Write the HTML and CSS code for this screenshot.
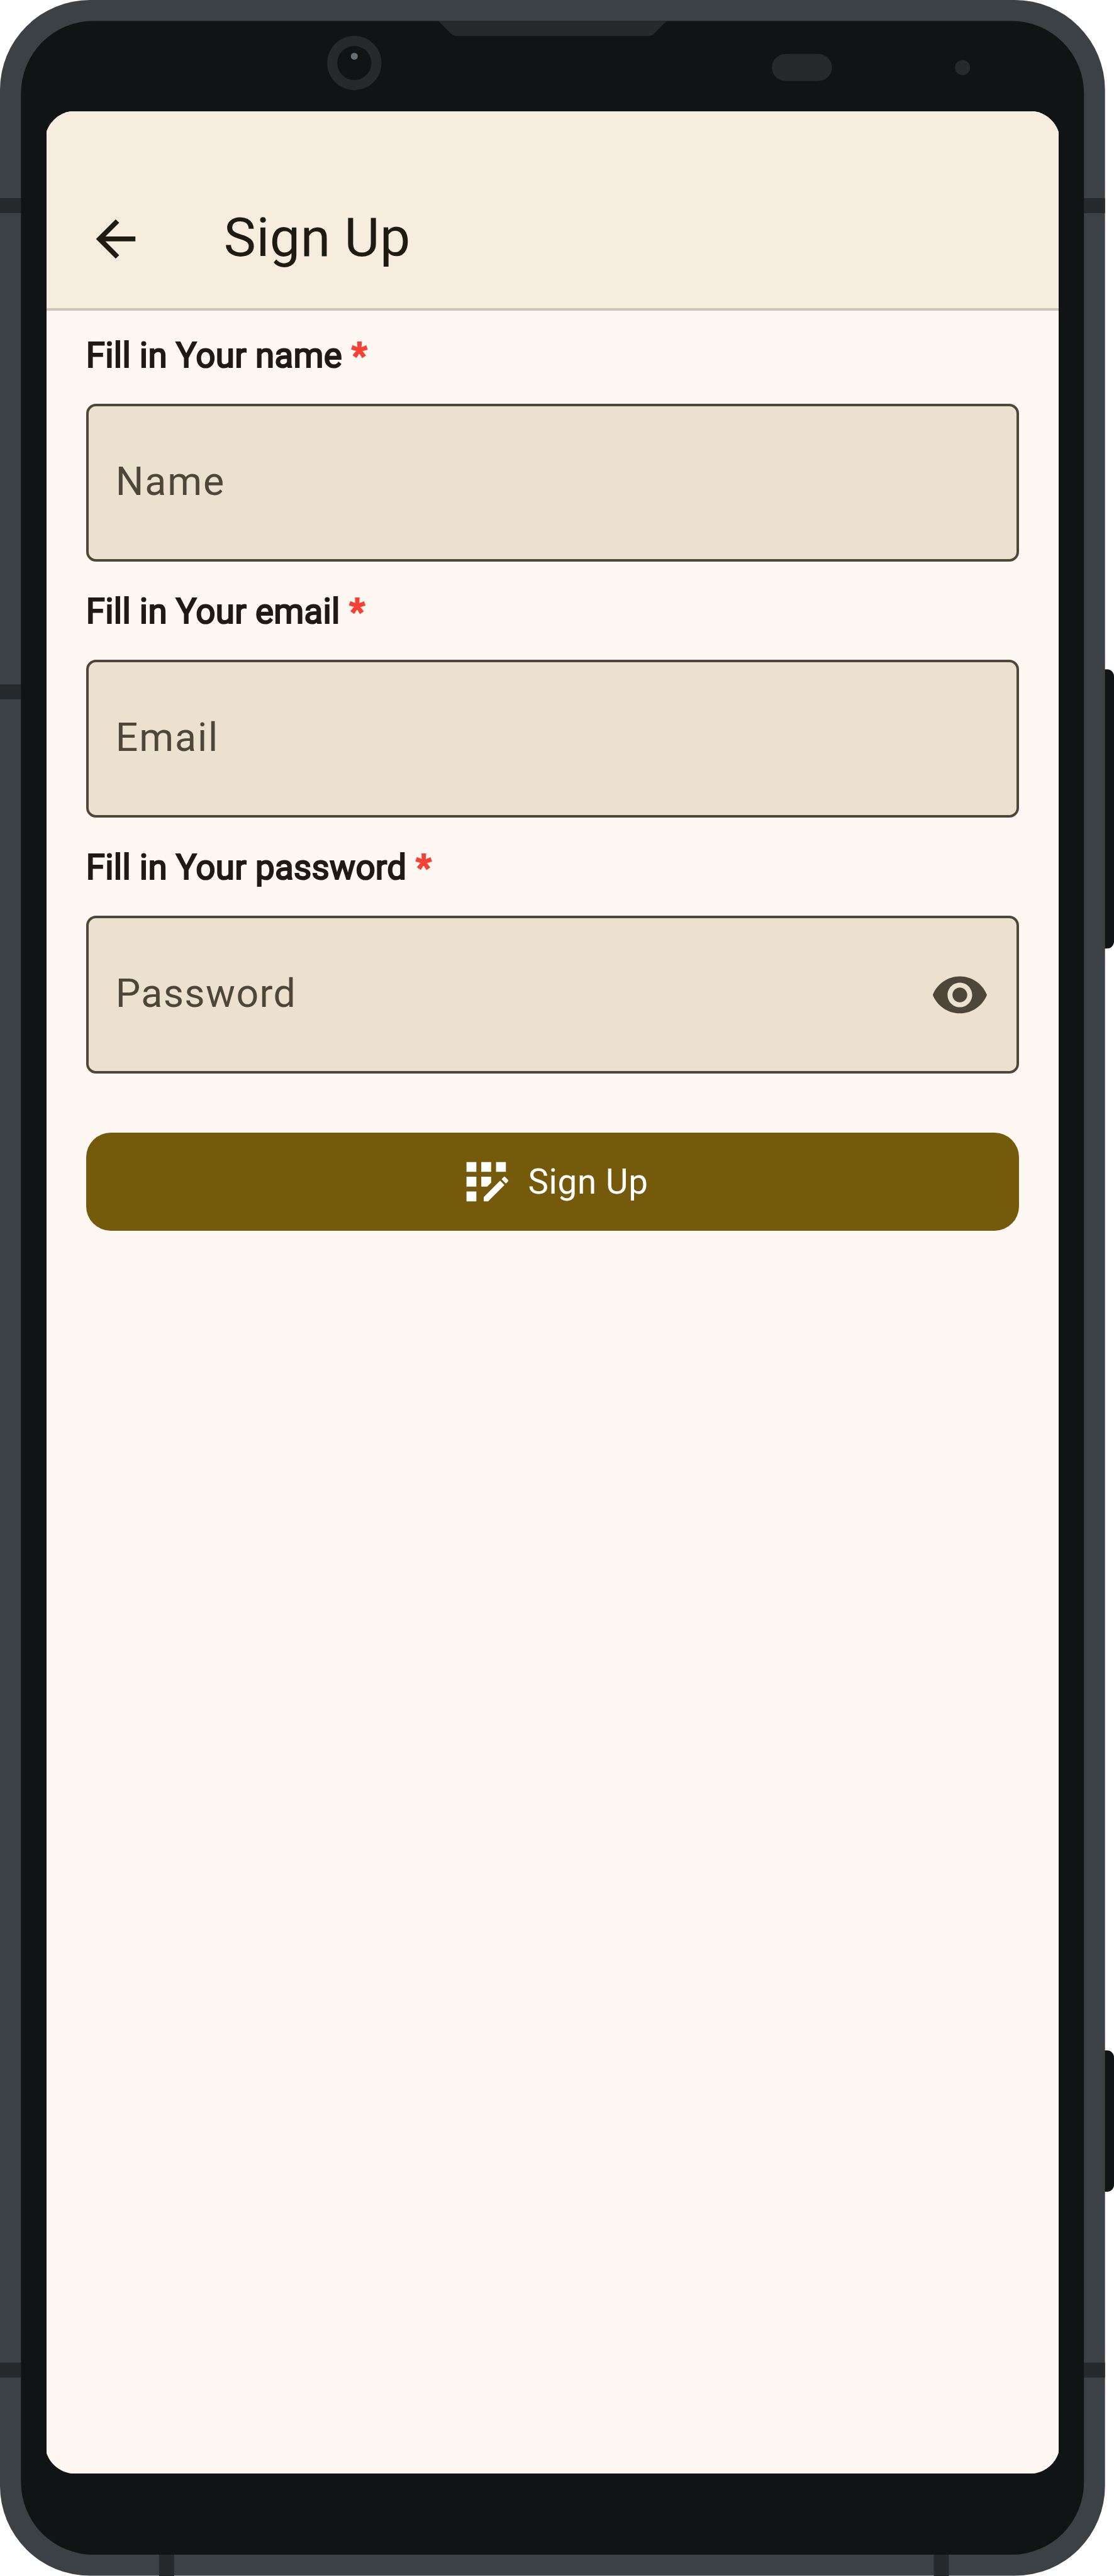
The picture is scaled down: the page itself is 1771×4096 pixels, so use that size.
FILE: index.html
```html
<!DOCTYPE html>
<html lang="en">
<head>
<meta charset="utf-8">
<title>Sign Up</title>
<link rel="stylesheet" href="styles.css">
</head>
<body>
<div class="device">
  <svg class="shell" viewBox="0 0 1771 4096" aria-hidden="true">
    <path class="bezel" d="M1750 1064.3h10a11 11 0 0 1 11 11v422a11 11 0 0 1-11 11h-10zM1750 3260.2h10a11 11 0 0 1 11 11v202.700a11 11 0 0 1-11 11h-10z"/>
    <rect class="frame" width="1756.700" height="4095.600" rx="143"/>
    <path class="slot" d="M0 315h1756.700v23.900H0zM0 1088.300h60v23.800H0zM0 3756.700h1756.700v23.900H0zM252.800 4050h24v46h-24zM1484.500 4050h23.900v46h-23.900z"/>
    <rect class="bezel" x="33.400" y="33.300" width="1689.800" height="4028.800" rx="115"/>
    <path class="slot" d="M691.500 33.100C696 33.300 698.500 34.500 700.500 37L716 52.500C719 55.800 722 57.200 727 57.200H1030C1035 57.200 1038 55.800 1041 52.500L1056 37C1058.500 34.500 1061 33.300 1065.500 33.100z"/>
    <circle class="slot" cx="563.300" cy="100.200" r="43.200"/>
    <circle class="bezel" cx="563.300" cy="100.200" r="27.100"/>
    <circle class="glint" cx="563.300" cy="89.400" r="5.500"/>
    <rect class="slot" x="1227.200" y="85.800" width="95.400" height="42.900" rx="21.450"/>
    <circle class="slot" cx="1530.200" cy="107.500" r="12"/>
  </svg>

  <main class="screen">
    <header class="app-bar">
      <svg class="icon" viewBox="0 0 24 24"><path d="M20 11H7.830l5.590-5.590L12 4l-8 8 8 8 1.410-1.410L7.830 13H20z"/></svg>
      <h1 class="title">Sign Up</h1>
    </header>
    <form class="form">
      <div class="group">
        <div class="label">Fill in Your name <span class="required">*</span></div>
        <div class="field"><span class="hint">Name</span></div>
      </div>
      <div class="group">
        <div class="label">Fill in Your email <span class="required">*</span></div>
        <div class="field"><span class="hint">Email</span></div>
      </div>
      <div class="group">
        <div class="label">Fill in Your password <span class="required">*</span></div>
        <div class="field">
          <span class="hint hint-password">Password</span>
          <svg class="icon" viewBox="0 0 24 24"><path d="M12 4.500C7 4.500 2.730 7.610 1 12c1.730 4.390 6 7.500 11 7.500s9.270-3.110 11-7.500c-1.730-4.390-6-7.500-11-7.500zM12 17c-2.760 0-5-2.240-5-5s2.240-5 5-5 5 2.240 5 5-2.240 5-5 5zm0-8c-1.660 0-3 1.340-3 3s1.340 3 3 3 3-1.340 3-3-1.340-3-3-3z"/></svg>
        </div>
      </div>
      <button class="submit" type="button">
        <svg class="icon" viewBox="0 0 24 24"><path d="M10 4h4v4h-4zM4 16h4v4H4zM4 10h4v4H4zM4 4h4v4H4zM14 12.420V10h-4v4h2.420zM20.880 11.290l-1.170-1.170c-.16-.16-.42-.16-.58 0l-.88.880L20 12.750l.88-.88c.16-.16.16-.42 0-.58zM11 18.250V20h1.750l6.670-6.670-1.750-1.750zM16 4h4v4h-4z"/></svg>
        <span class="submit-text">Sign Up</span>
      </button>
    </form>
  </main>
</div>
</body>
</html>
```

FILE: styles.css
```css
* {
  box-sizing: border-box;
}

body {
  margin: 0;
  background: #fff;
  font-family: Roboto, "Liberation Sans", sans-serif;
  color: #1f1b13;
}

.device {
  position: relative;
  width: 1771px;
  height: 4096px;
  padding: 176.6px 88.4px 162.6px 74.1px;
  overflow: hidden;
}

/* Phone hardware drawn behind the screen */
.shell {
  position: absolute;
  inset: 0;
  width: 1771px;
  height: 4096px;
}

.frame { fill: #3b4144; }
.bezel { fill: #111415; }
.slot { fill: #262a2d; }
.glint { fill: #657073; }

.screen {
  position: relative;
  height: 100%;
  background: #fff8f2;
  clip-path: inset(0 -2.6px round 48px);
}

.icon {
  display: block;
  flex: none;
  width: 93.9px;
  height: 93.9px;
  fill: currentColor;
}

.app-bar {
  display: flex;
  align-items: center;
  gap: 125.2px;
  height: 317.1px;
  padding: 93.5px 62.6px 0;
  background: #f6eddf;
  border-bottom: 4px solid #d0c5b4;
}

.title {
  margin: 0;
  padding-bottom: 3px;
  font-size: 86px;
  font-weight: 400;
  line-height: 110px;
  letter-spacing: 0.55px;
}

.form {
  padding: 32px 62.6px 0;
}

.group {
  margin-bottom: 40.2px;
}

.label {
  height: 116.5px;
  font-size: 54.7px;
  line-height: 78px;
  letter-spacing: 0.3px;
  white-space: nowrap;
  -webkit-text-stroke: 2.2px currentColor;
}

.required {
  margin-left: 0.8px;
  font-weight: 700;
  color: #f44336;
}

.field {
  display: flex;
  align-items: center;
  justify-content: space-between;
  height: 250.4px;
  padding: 0 43px;
  color: #4d4639;
  background: #ece1cf;
  border: 4px solid #4d4639;
  border-radius: 15.6px;
}

.hint {
  padding-bottom: 3px;
  font-size: 62.6px;
  line-height: 94px;
  letter-spacing: 1.9px;
}

.hint-password {
  letter-spacing: 1.37px;
}

.submit {
  display: flex;
  align-items: center;
  justify-content: center;
  gap: 19.5px;
  width: 100%;
  height: 156.5px;
  margin-top: 94px;
  padding: 0;
  font: 400 54.7px/78px Roboto, "Liberation Sans", sans-serif;
  letter-spacing: 0.7px;
  color: #fff;
  background: #755a0b;
  border: 0;
  border-radius: 39px;
}

.submit-text {
  padding-top: 1px;
}
```
